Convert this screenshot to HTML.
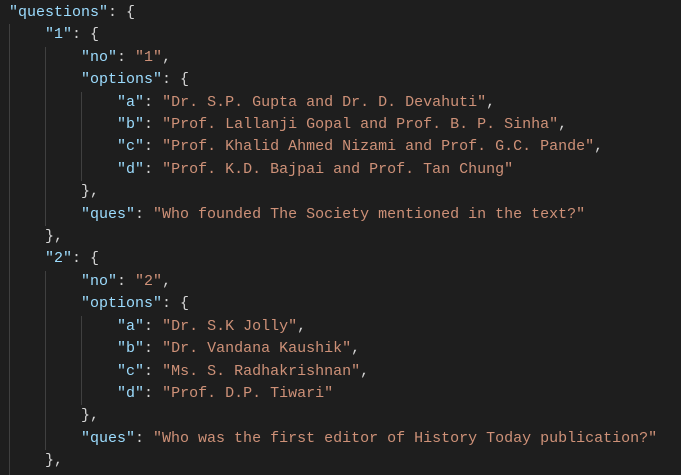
<!DOCTYPE html>
<html><head><meta charset="utf-8"><style>
html,body{margin:0;padding:0;background:#1e1e1e;width:681px;height:474px;overflow:hidden}
.c{position:absolute;left:9px;top:2px;font-family:"Liberation Mono",monospace;font-size:15px;line-height:22.4px;color:#d4d4d4;white-space:pre}
.k{color:#9cdcfe}.s{color:#ce9178}
.g{position:absolute;width:1px;background:#404040}
</style></head><body>
<div class="g" style="left:9px;top:24px;height:451px"></div>
<div class="g" style="left:45px;top:47px;height:179px"></div>
<div class="g" style="left:45px;top:271px;height:179px"></div>
<div class="g" style="left:81px;top:92px;height:89px"></div>
<div class="g" style="left:81px;top:316px;height:89px"></div>
<div class="c"><span class="k">"questions"</span>: {
    <span class="k">"1"</span>: {
        <span class="k">"no"</span>: <span class="s">"1"</span>,
        <span class="k">"options"</span>: {
            <span class="k">"a"</span>: <span class="s">"Dr. S.P. Gupta and Dr. D. Devahuti"</span>,
            <span class="k">"b"</span>: <span class="s">"Prof. Lallanji Gopal and Prof. B. P. Sinha"</span>,
            <span class="k">"c"</span>: <span class="s">"Prof. Khalid Ahmed Nizami and Prof. G.C. Pande"</span>,
            <span class="k">"d"</span>: <span class="s">"Prof. K.D. Bajpai and Prof. Tan Chung"</span>
        },
        <span class="k">"ques"</span>: <span class="s">"Who founded The Society mentioned in the text?"</span>
    },
    <span class="k">"2"</span>: {
        <span class="k">"no"</span>: <span class="s">"2"</span>,
        <span class="k">"options"</span>: {
            <span class="k">"a"</span>: <span class="s">"Dr. S.K Jolly"</span>,
            <span class="k">"b"</span>: <span class="s">"Dr. Vandana Kaushik"</span>,
            <span class="k">"c"</span>: <span class="s">"Ms. S. Radhakrishnan"</span>,
            <span class="k">"d"</span>: <span class="s">"Prof. D.P. Tiwari"</span>
        },
        <span class="k">"ques"</span>: <span class="s">"Who was the first editor of History Today publication?"</span>
    },
</div>
</body></html>
